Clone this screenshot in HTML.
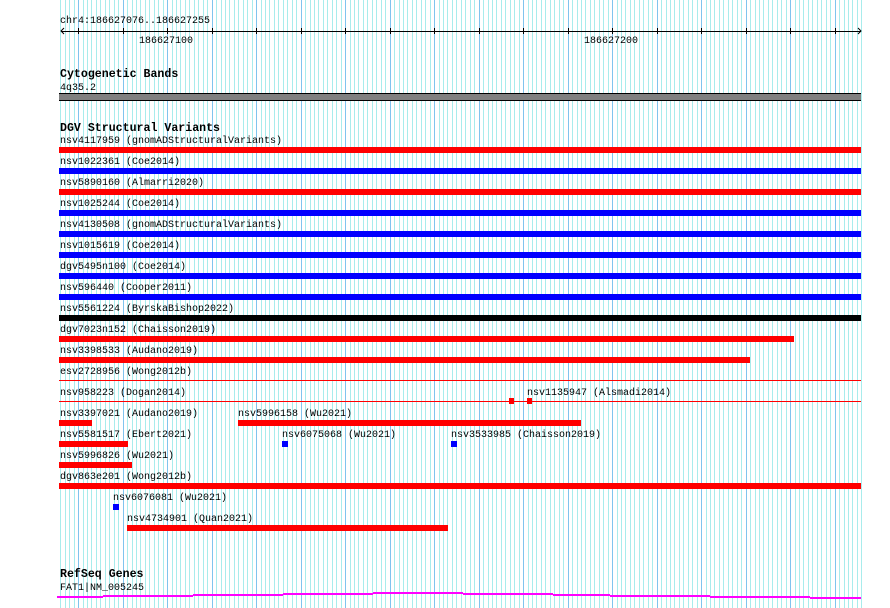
<!DOCTYPE html><html><head><meta charset="utf-8"><style>
body{margin:0;width:890px;height:608px;background:#fff;position:relative;overflow:hidden;font-family:"Liberation Mono","DejaVu Sans Mono",monospace;}
.g{position:absolute;top:0;width:1px;height:608px;background:#a8ecec}
.gm{background:#80c4ee}
.t{position:absolute;font-size:10px;letter-spacing:0px;line-height:10px;color:#000;white-space:pre;}
.h{position:absolute;font-size:11.6px;line-height:12px;font-weight:bold;white-space:pre;}
.b{position:absolute;height:6px;}
.r{background:#f00}.u{background:#00f}.k{background:#000}
.m{position:absolute;height:1px;background:#f0f}
</style></head><body>
<div id="grid"></div>
<script>
(function(){var h='';for(var k=0;k<=180;k++){var x=Math.round(60.3+4.45*k);h+='<div class="g'+(((k-4)%10==0)?' gm':'')+'" style="left:'+x+'px"></div>';}document.getElementById('grid').innerHTML=h;})();
</script>
<div class="t" style="left:60px;top:17px">chr4:186627076..186627255</div>
<div style="position:absolute;left:61px;top:31px;width:800px;height:1px;background:#000"></div>
<svg style="position:absolute;left:0;top:0" width="890" height="50">
<path d="M64 28 L61 31 L64 34 M858 28 L861 31 L858 34" stroke="#000" fill="none"/>
<g stroke="#000">
<line x1="78.5" y1="28" x2="78.5" y2="34"/><line x1="123.5" y1="28" x2="123.5" y2="34"/><line x1="167.5" y1="28" x2="167.5" y2="34"/><line x1="212.5" y1="28" x2="212.5" y2="34"/><line x1="256.5" y1="28" x2="256.5" y2="34"/><line x1="301.5" y1="28" x2="301.5" y2="34"/><line x1="345.5" y1="28" x2="345.5" y2="34"/><line x1="390.5" y1="28" x2="390.5" y2="34"/><line x1="434.5" y1="28" x2="434.5" y2="34"/><line x1="479.5" y1="28" x2="479.5" y2="34"/><line x1="523.5" y1="28" x2="523.5" y2="34"/><line x1="568.5" y1="28" x2="568.5" y2="34"/><line x1="612.5" y1="28" x2="612.5" y2="34"/><line x1="657.5" y1="28" x2="657.5" y2="34"/><line x1="701.5" y1="28" x2="701.5" y2="34"/><line x1="746.5" y1="28" x2="746.5" y2="34"/><line x1="790.5" y1="28" x2="790.5" y2="34"/><line x1="835.5" y1="28" x2="835.5" y2="34"/>
</g></svg>
<div class="t" style="left:139px;top:37px">186627100</div>
<div class="t" style="left:584px;top:37px">186627200</div>

<div class="h" style="left:60px;top:69px">Cytogenetic Bands</div>
<div class="t" style="left:60px;top:84px">4q35.2</div>
<div style="position:absolute;left:59px;top:93px;width:802px;height:6px;background:#808080;border-top:1px solid #000;border-bottom:1px solid #000"></div>

<div class="h" style="left:60px;top:123px">DGV Structural Variants</div>
<div class="t" style="left:60px;top:137px">nsv4117959 (gnomADStructuralVariants)</div><div class="b r" style="left:59px;top:147px;width:802px"></div>
<div class="t" style="left:60px;top:158px">nsv1022361 (Coe2014)</div><div class="b u" style="left:59px;top:168px;width:802px"></div>
<div class="t" style="left:60px;top:179px">nsv5890160 (Almarri2020)</div><div class="b r" style="left:59px;top:189px;width:802px"></div>
<div class="t" style="left:60px;top:200px">nsv1025244 (Coe2014)</div><div class="b u" style="left:59px;top:210px;width:802px"></div>
<div class="t" style="left:60px;top:221px">nsv4130508 (gnomADStructuralVariants)</div><div class="b u" style="left:59px;top:231px;width:802px"></div>
<div class="t" style="left:60px;top:242px">nsv1015619 (Coe2014)</div><div class="b u" style="left:59px;top:252px;width:802px"></div>
<div class="t" style="left:60px;top:263px">dgv5495n100 (Coe2014)</div><div class="b u" style="left:59px;top:273px;width:802px"></div>
<div class="t" style="left:60px;top:284px">nsv596440 (Cooper2011)</div><div class="b u" style="left:59px;top:294px;width:802px"></div>
<div class="t" style="left:60px;top:305px">nsv5561224 (ByrskaBishop2022)</div><div class="b k" style="left:59px;top:315px;width:802px"></div>
<div class="t" style="left:60px;top:326px">dgv7023n152 (Chaisson2019)</div><div class="b r" style="left:59px;top:336px;width:735px"></div>
<div class="t" style="left:60px;top:347px">nsv3398533 (Audano2019)</div><div class="b r" style="left:59px;top:357px;width:691px"></div>
<div class="t" style="left:60px;top:368px">esv2728956 (Wong2012b)</div><div style="position:absolute;left:59px;top:380px;width:802px;height:1px;background:#f00"></div>
<div class="t" style="left:60px;top:389px">nsv958223 (Dogan2014)</div><div style="position:absolute;left:59px;top:401px;width:802px;height:1px;background:#f00"></div>
<div class="b r" style="left:509px;top:398px;width:5px;height:6px"></div>
<div class="b r" style="left:527px;top:398px;width:5px;height:6px"></div>
<div class="t" style="left:527px;top:389px">nsv1135947 (Alsmadi2014)</div>
<div class="t" style="left:60px;top:410px">nsv3397021 (Audano2019)</div><div class="b r" style="left:59px;top:420px;width:33px"></div>
<div class="t" style="left:238px;top:410px">nsv5996158 (Wu2021)</div><div class="b r" style="left:238px;top:420px;width:343px"></div>
<div class="t" style="left:60px;top:431px">nsv5581517 (Ebert2021)</div><div class="b r" style="left:59px;top:441px;width:69px"></div>
<div class="t" style="left:282px;top:431px">nsv6075068 (Wu2021)</div><div class="b u" style="left:282px;top:441px;width:6px"></div>
<div class="t" style="left:451px;top:431px">nsv3533985 (Chaisson2019)</div><div class="b u" style="left:451px;top:441px;width:6px"></div>
<div class="t" style="left:60px;top:452px">nsv5996826 (Wu2021)</div><div class="b r" style="left:59px;top:462px;width:73px"></div>
<div class="t" style="left:60px;top:473px">dgv863e201 (Wong2012b)</div><div class="b r" style="left:59px;top:483px;width:802px"></div>
<div class="t" style="left:113px;top:494px">nsv6076081 (Wu2021)</div><div class="b u" style="left:113px;top:504px;width:6px"></div>
<div class="t" style="left:127px;top:515px">nsv4734901 (Quan2021)</div><div class="b r" style="left:127px;top:525px;width:321px"></div>

<div class="h" style="left:60px;top:569px">RefSeq Genes</div>
<div class="t" style="left:60px;top:584px">FAT1|NM_005245</div>
<div class="m" style="left:57px;top:596px;width:46px;height:2px"></div>
<div class="m" style="left:103px;top:595px;width:90px;height:2px"></div>
<div class="m" style="left:193px;top:594px;width:90px;height:2px"></div>
<div class="m" style="left:283px;top:593px;width:90px;height:2px"></div>
<div class="m" style="left:373px;top:592px;width:90px;height:2px"></div>
<div class="m" style="left:463px;top:593px;width:90px;height:2px"></div>
<div class="m" style="left:553px;top:594px;width:57px;height:2px"></div>
<div class="m" style="left:610px;top:595px;width:100px;height:2px"></div>
<div class="m" style="left:710px;top:596px;width:100px;height:2px"></div>
<div class="m" style="left:810px;top:597px;width:51px;height:2px"></div>
</body></html>
